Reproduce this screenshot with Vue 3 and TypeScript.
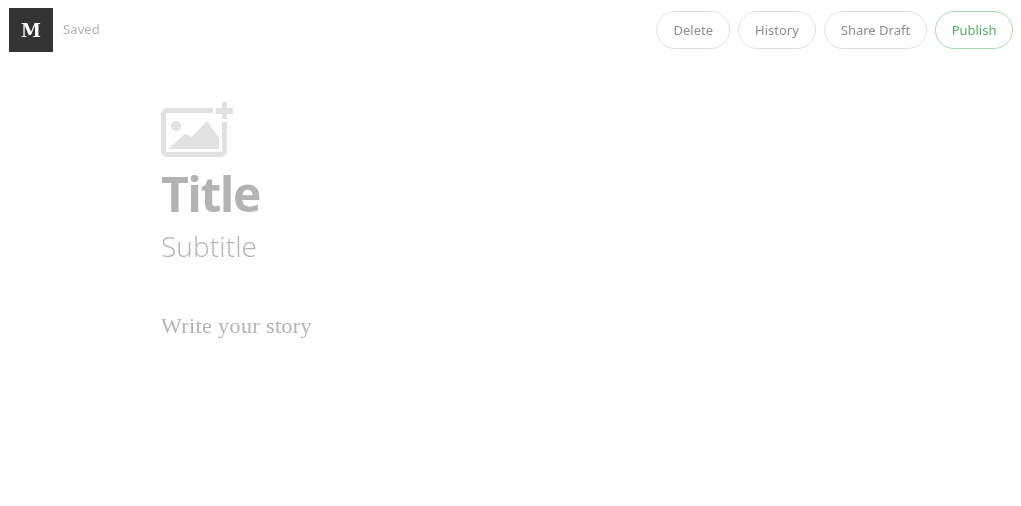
<script setup lang="ts">
const actions: { label: string; primary?: boolean }[] = [
  { label: 'Delete' },
  { label: 'History' },
  { label: 'Share Draft' },
  { label: 'Publish', primary: true },
]
</script>

<template>
  <div class="page">
    <header class="topbar">
      <div class="brand">
        <div class="logo">M</div>
        <span class="status">Saved</span>
      </div>
      <nav class="actions">
        <button
          v-for="a in actions"
          :key="a.label"
          class="pill"
          :class="{ primary: a.primary }"
        >{{ a.label }}</button>
      </nav>
    </header>
    <main class="editor">
      <svg class="image-icon" width="72" height="55" viewBox="0 0 72 55">
        <path d="M52 8.500H6A3.500 3.500 0 0 0 2.500 12V49A3.500 3.500 0 0 0 6 52.500H60A3.500 3.500 0 0 0 63.500 49V20" fill="none" stroke="#e1e1df" stroke-width="5" />
        <rect x="55" y="6" width="17" height="6" fill="#e1e1df" />
        <rect x="61" y="0" width="5" height="17" fill="#e1e1df" />
        <circle cx="15" cy="24" r="5" fill="#e1e1df" />
        <path d="M7 47L24 32L31 35L46 19L58 36V47Z" fill="#e1e1df" />
      </svg>
      <h1 class="title">Title</h1>
      <h2 class="subtitle">Subtitle</h2>
      <p class="story">Write your story</p>
    </main>
  </div>
</template>

<style>
html, body { margin: 0; background: #fff; }
</style>

<style scoped>
.page {
  width: 1021px;
  height: 506px;
  overflow: hidden;
  background: #fff;
}
.topbar {
  display: flex;
  justify-content: space-between;
  align-items: flex-start;
  padding: 8px 8px 0 9px;
  will-change: opacity;
}
.brand {
  display: flex;
  align-items: center;
  gap: 10px;
}
.logo {
  width: 44px;
  height: 44px;
  background: #333332;
  color: #fff;
  display: flex;
  align-items: center;
  justify-content: center;
  font-family: "DejaVu Serif", serif;
  font-weight: 700;
  font-size: 18px;
}
.status {
  font-family: "Noto Sans", sans-serif;
  font-size: 13px;
  letter-spacing: 0.100px;
  color: #b3b3b1;
  margin-top: -2px;
}
.actions {
  display: flex;
  gap: 8px;
  margin-top: 3px;
}
.pill {
  height: 38px;
  padding: 0 16px;
  border: 1px solid #dfdfdd;
  border-radius: 19px;
  background: #fff;
  color: #8f8f8d;
  font-family: "Noto Sans", sans-serif;
  font-size: 13px;
}
.pill.primary {
  padding: 0 15.500px;
  border-color: #a6dcae;
  color: #57ad68;
}
.editor {
  padding: 50px 0 0 161px;
  will-change: opacity;
}
.image-icon {
  display: block;
}
.title {
  margin: 8px 0 0;
  font-family: "Open Sans", sans-serif;
  font-weight: 700;
  font-size: 48px;
  line-height: 58px;
  letter-spacing: -1.500px;
  color: #b3b3b1;
}
.subtitle {
  margin: 0;
  font-family: "Open Sans", sans-serif;
  font-weight: 300;
  font-size: 28px;
  letter-spacing: 0.100px;
  line-height: 46px;
  color: #b3b3b1;
}
.story {
  margin: 41px 0 0;
  font-family: "Liberation Serif", serif;
  font-size: 22px;
  letter-spacing: 0.400px;
  line-height: 32px;
  color: #b3b3b1;
}
</style>
